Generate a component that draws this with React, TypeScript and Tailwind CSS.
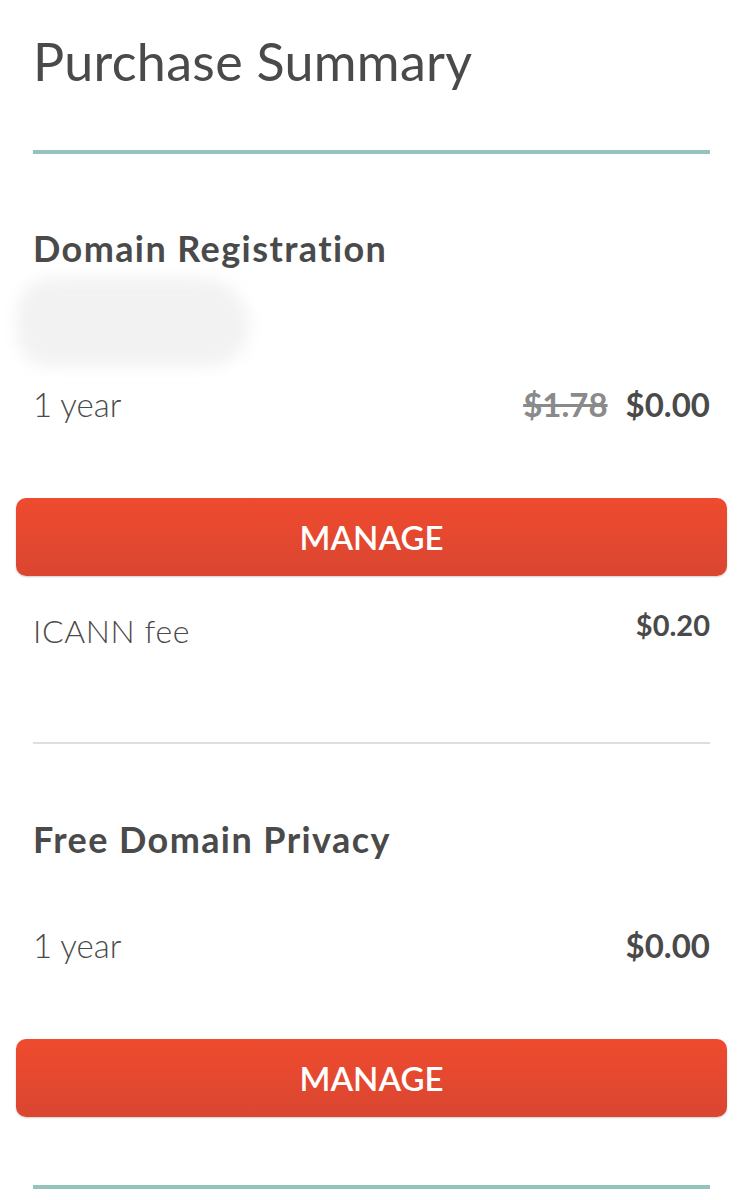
export default function App() {
  return (
    <div className="min-h-[1200px] bg-white text-[#4a4a4a] [font-family:Lato,'Open_Sans',sans-serif]">
      <div className="px-[33px]">
        <h1 className="pt-[35px] text-[52px] font-normal leading-none tracking-[0.3px]">Purchase Summary</h1>
        <div className="mt-[63px] h-[4px] bg-[#93c3bc]" />

        <h2 className="mt-[76px] text-[36px] font-bold leading-none tracking-[1.4px]">Domain Registration</h2>
        <div className="ml-[-16px] mt-[12px] h-[88px] w-[232px] rounded-[44px_60px_50px_40px] bg-[#f2f2f2] blur-[8px]" />

        <div className="mt-[22px] flex items-start justify-between leading-none">
          <span className="text-[33px] font-light">1 year</span>
          <div className="flex gap-[18px] text-[33px] font-bold">
            <span className="text-[#8a8a8a] line-through">$1.78</span>
            <span>$0.00</span>
          </div>
        </div>
      </div>

      <div className="px-[16px]">
        <ManageButton className="mt-[77px]" />
      </div>

      <div className="px-[33px]">
        <div className="mt-[34px] flex items-start justify-between leading-none">
          <span className="mt-[5px] text-[32px] font-light tracking-[0.6px]">ICANN fee</span>
          <span className="text-[29px] font-bold">$0.20</span>
        </div>
        <div className="mt-[95px] h-[2px] bg-[#dedede]" />

        <h2 className="mt-[77px] text-[36px] font-bold leading-none tracking-[1.4px]">Free Domain Privacy</h2>

        <div className="mt-[72px] flex items-start justify-between leading-none">
          <span className="text-[33px] font-light">1 year</span>
          <span className="text-[33px] font-bold">$0.00</span>
        </div>
      </div>

      <div className="px-[16px]">
        <ManageButton className="mt-[77px]" />
      </div>

      <div className="px-[33px]">
        <div className="mt-[68px] h-[4px] bg-[#93c3bc]" />
      </div>
    </div>
  );
}

function ManageButton({ className = "" }: { className?: string }) {
  return (
    <button
      type="button"
      className={`flex h-[78px] w-full items-center justify-center rounded-[10px] bg-gradient-to-b from-[#ef4b2e] to-[#da4631] text-[33px] font-semibold leading-none text-white shadow-[0_1px_2px_rgba(0,0,0,0.2)] ${className}`}
    >
      MANAGE
    </button>
  );
}
